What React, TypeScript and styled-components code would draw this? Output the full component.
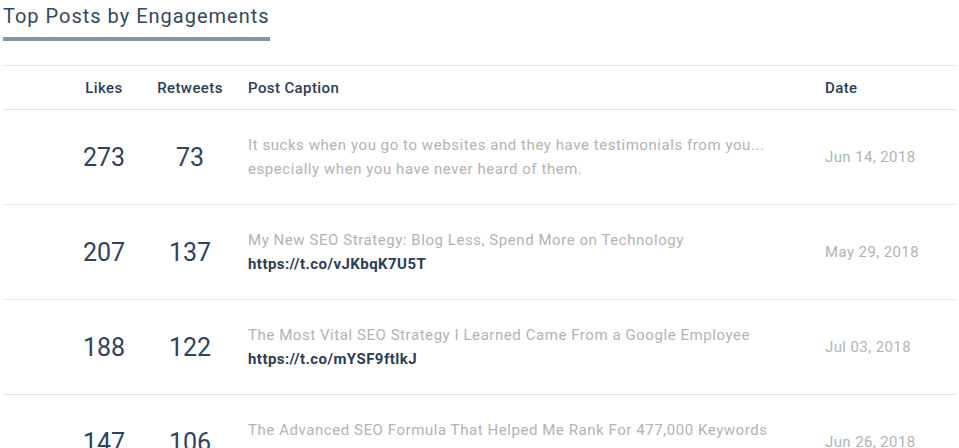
import styled, { createGlobalStyle } from "styled-components";

type Post = {
  likes: number;
  retweets: number;
  caption: string;
  link?: string;
  date: string;
};

const posts: Post[] = [
  {
    likes: 273,
    retweets: 73,
    caption:
      "It sucks when you go to websites and they have testimonials from you... especially when you have never heard of them.",
    date: "Jun 14, 2018",
  },
  {
    likes: 207,
    retweets: 137,
    caption: "My New SEO Strategy: Blog Less, Spend More on Technology",
    link: "https://t.co/vJKbqK7U5T",
    date: "May 29, 2018",
  },
  {
    likes: 188,
    retweets: 122,
    caption: "The Most Vital SEO Strategy I Learned Came From a Google Employee",
    link: "https://t.co/mYSF9ftlkJ",
    date: "Jul 03, 2018",
  },
  {
    likes: 147,
    retweets: 106,
    caption: "The Advanced SEO Formula That Helped Me Rank For 477,000 Keywords",
    link: "https://t.co/lTYuEZsFjH",
    date: "Jun 26, 2018",
  },
];

const App = () => {
  return (
    <>
      <GlobalStyle />
      <Container>
        <Title>Top Posts by Engagements</Title>
        <Table>
          <HeaderRow>
            <span />
            <HeadCell $center>Likes</HeadCell>
            <HeadCell $center>Retweets</HeadCell>
            <HeadCell $pad>Post Caption</HeadCell>
            <HeadCell>Date</HeadCell>
          </HeaderRow>
          {posts.map((p) => (
            <Row key={p.date}>
              <span />
              <Count>{p.likes}</Count>
              <Count>{p.retweets}</Count>
              <Caption>
                <span className="text">{p.caption}</span>
                {p.link && <a className="link">{p.link}</a>}
              </Caption>
              <DateCell>{p.date}</DateCell>
            </Row>
          ))}
        </Table>
      </Container>
    </>
  );
};

const GlobalStyle = createGlobalStyle`
  body {
    margin: 0;
    background: #fff;
    font-family: Roboto, "Liberation Sans", sans-serif;
    overflow: hidden;
  }
`;

const Container = styled.div`
  padding: 0 4px 0 3px;
`;

const Title = styled.h2`
  display: inline-block;
  margin: 0;
  padding: 4px 0 9px;
  font-size: 20px;
  font-weight: 400;
  line-height: 24px;
  letter-spacing: 1px;
  color: #34475f;
  border-bottom: 4px solid #8794a2;
`;

const Table = styled.div`
  margin-top: 24px;
  border-top: 1px solid #e3e3e3;
`;

const HeaderRow = styled.div`
  display: grid;
  grid-template-columns: 58px 86px 86px 1fr 130px;
  align-items: center;
  height: 43px;
  border-bottom: 1px solid #e3e3e3;
`;

const HeadCell = styled.div<{ $center?: boolean; $pad?: boolean }>`
  font-size: 15px;
  font-weight: 500;
  letter-spacing: 0.4px;
  color: #2c3e55;
  text-align: ${({ $center }) => ($center ? "center" : "left")};
  padding-left: ${({ $pad }) => ($pad ? "15px" : "0")};
`;

const Row = styled.div`
  display: grid;
  grid-template-columns: 58px 86px 86px 1fr 130px;
  align-items: center;
  height: 94px;
  border-bottom: 1px solid #e3e3e3;
`;

const Count = styled.div`
  text-align: center;
  font-size: 25px;
  font-weight: 400;
  color: #2e4360;
`;

const Caption = styled.div`
  padding: 0 38px 0 15px;
  font-size: 15px;
  line-height: 24px;
  letter-spacing: 0.56px;
  .text {
    display: block;
    color: #b3b3b3;
  }
  .link {
    display: block;
    color: #2c3e55;
    font-weight: 700;
    letter-spacing: 0.45px;
  }
`;

const DateCell = styled.div`
  font-size: 15px;
  letter-spacing: 0.4px;
  color: #b3b3b3;
`;

export default App;
